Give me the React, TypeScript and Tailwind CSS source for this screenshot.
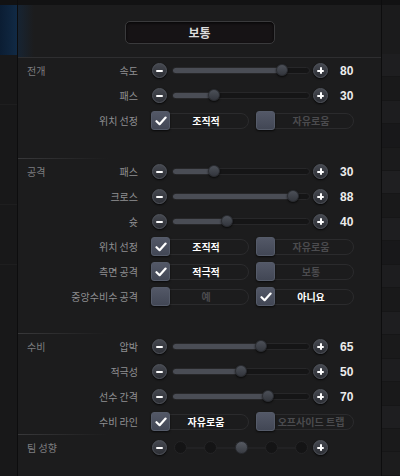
import React from "react";

const KR = "font-['Noto_Sans_CJK_KR','Noto_Sans',sans-serif]";

type SliderRow = { kind: "slider"; label: string; value: number };
type CheckRow = {
  kind: "check";
  label: string;
  options: [string, string];
  selected: 0 | 1;
};
type StepRow = { kind: "steps"; label: string; steps: number; selected: number };
type Row = SliderRow | CheckRow | StepRow;

interface Section {
  title: string;
  rows: Row[];
  padTop: string;
  padBottom: string;
}

const sections: Section[] = [
  {
    title: "전개",
    padTop: "pt-0",
    padBottom: "pb-[25px]",
    rows: [
      { kind: "slider", label: "속도", value: 80 },
      { kind: "slider", label: "패스", value: 30 },
      { kind: "check", label: "위치 선정", options: ["조직적", "자유로움"], selected: 0 },
    ],
  },
  {
    title: "공격",
    padTop: "pt-0",
    padBottom: "pb-[22px]",
    rows: [
      { kind: "slider", label: "패스", value: 30 },
      { kind: "slider", label: "크로스", value: 88 },
      { kind: "slider", label: "슛", value: 40 },
      { kind: "check", label: "위치 선정", options: ["조직적", "자유로움"], selected: 0 },
      { kind: "check", label: "측면 공격", options: ["적극적", "보통"], selected: 0 },
      { kind: "check", label: "중앙수비수 공격", options: ["예", "아니요"], selected: 1 },
    ],
  },
  {
    title: "수비",
    padTop: "pt-[2px]",
    padBottom: "pb-0",
    rows: [
      { kind: "slider", label: "압박", value: 65 },
      { kind: "slider", label: "적극성", value: 50 },
      { kind: "slider", label: "선수 간격", value: 70 },
      { kind: "check", label: "수비 라인", options: ["자유로움", "오프사이드 트랩"], selected: 0 },
    ],
  },
  {
    title: "팀 성향",
    padTop: "pt-0",
    padBottom: "pb-0",
    rows: [{ kind: "steps", label: "", steps: 5, selected: 2 }],
  },
];

// faint stripes of the list that sits behind the panel
const bands = [
  "#1e1e20", "#19191a", "#1d1d1f", "#18181a", "#1b1b1c", "#1f1f21",
  "#19191a", "#1e1e20", "#18181a", "#1d1d1f", "#19191a", "#1e1e20",
  "#1a1a1b", "#1d1d1f", "#19191a", "#1e1e20", "#1a1a1b", "#1c1c1d",
];

function RoundButton({ plus }: { plus?: boolean }) {
  return (
    <div className="flex h-[15px] w-[15px] shrink-0 items-center justify-center rounded-full border border-[#50545c] bg-gradient-to-b from-[#454850] to-[#2d2f35] shadow-[0_1px_2px_rgba(0,0,0,0.8)]">
      <div className="relative flex h-[7px] w-[7px] items-center justify-center">
        <div className="h-[2px] w-[7px] rounded-[1px] bg-white" />
        {plus && (
          <div className="absolute left-[2.5px] top-0 h-[7px] w-[2px] rounded-[1px] bg-white" />
        )}
      </div>
    </div>
  );
}

function Slider({ value }: { value: number }) {
  return (
    <div className="relative h-[7px] w-[138px] rounded-full border border-[#272729] bg-[#151516]">
      <div
        className="absolute left-0 top-0 h-full rounded-full bg-[#4a4d55]"
        style={{ width: `${value}%` }}
      />
      <div
        className="absolute top-[-4px] h-[12px] w-[12px] -translate-x-1/2 rounded-full border border-[#2a2c31] bg-gradient-to-b from-[#4c5058] to-[#33363d] shadow-[0_1px_2px_rgba(0,0,0,0.7)]"
        style={{ left: `${value}%` }}
      />
    </div>
  );
}

function CheckMark() {
  return (
    <svg width="12" height="10" viewBox="0 0 12 10" fill="none">
      <path
        d="M1.5 5.2 L4.6 8.2 L10.6 1.6"
        stroke="white"
        strokeWidth="2.2"
        strokeLinecap="round"
        strokeLinejoin="round"
      />
    </svg>
  );
}

function CheckPill({ text, on }: { text: string; on: boolean }) {
  return (
    <div className="flex h-[16px] w-[98px] items-center rounded-full border border-[#2b2b2d]">
      <div className="-ml-px flex h-[19px] w-[19px] shrink-0 items-center justify-center rounded-[3px] border border-[#555b69] bg-gradient-to-b from-[#535867] to-[#424755] shadow-[0_1px_2px_rgba(0,0,0,0.7)]">
        {on && <CheckMark />}
      </div>
      <span
        className={`flex-1 pr-[6px] text-center text-[10px] font-bold leading-none ${KR} ${
          on ? "text-white" : "text-[#4b4b4e]"
        }`}
      >
        {text}
      </span>
    </div>
  );
}

function Steps({ steps, selected }: { steps: number; selected: number }) {
  return (
    <div className="relative flex w-[138px] items-center justify-between px-[2px]">
      <div className="absolute left-[8px] right-[8px] top-1/2 h-[2px] -translate-y-1/2 bg-[#222224]" />
      {Array.from({ length: steps }).map((_, i) => (
        <div
          key={i}
          className={`relative h-[13px] w-[13px] rounded-full ${
            i === selected
              ? "border border-[#2a2c31] bg-gradient-to-b from-[#565a62] to-[#393c43]"
              : "border border-[#242426] bg-[#141415]"
          }`}
        />
      ))}
    </div>
  );
}

function RowView({ row, title }: { row: Row; title?: string }) {
  return (
    <div className="flex h-[25px] items-center">
      <div className="flex w-[120px] shrink-0 items-center justify-between pl-[9px]">
        <span className={`text-[10px] text-[#7e7e80] ${KR}`}>{title ?? ""}</span>
        <span className={`text-[10px] text-[#8f8f92] ${KR}`}>{row.label}</span>
      </div>
      {row.kind === "check" ? (
        <div className="ml-[13px] flex items-center gap-[7px]">
          <CheckPill text={row.options[0]} on={row.selected === 0} />
          <CheckPill text={row.options[1]} on={row.selected === 1} />
        </div>
      ) : (
        <div className="ml-[14px] flex items-center">
          <RoundButton />
          <div className="ml-[5px] mr-[3px]">
            {row.kind === "slider" ? (
              <Slider value={row.value} />
            ) : (
              <Steps steps={row.steps} selected={row.selected} />
            )}
          </div>
          <RoundButton plus />
          {row.kind === "slider" && (
            <span className="ml-[12px] font-['Liberation_Sans',Arial,sans-serif] text-[12px] font-bold text-[#ececec]">
              {row.value}
            </span>
          )}
        </div>
      )}
    </div>
  );
}

export default function App() {
  return (
    <div className="flex h-[476px] w-[400px] overflow-hidden bg-[#1c1c1d]">
      {/* left rail */}
      <div className="flex w-[18px] shrink-0 flex-col border-r border-[#0d0d0e] bg-[#181819]">
        <div className="h-[5px] bg-[#121213]" />
        <div className="h-[50px] bg-gradient-to-r from-[#0b1d33] to-[#112a45]" />
        <div className="h-[50px] border-b border-[#1e1e1f]" />
        <div className="h-[100px] border-b border-[#1e1e1f]" />
        <div className="h-[60px] border-b border-[#1e1e1f]" />
      </div>

      {/* panel */}
      <div className="flex min-w-0 flex-1 flex-col">
        <div className="h-[5px] bg-[#121213]" />
        <div className="flex h-[52px] items-start justify-center bg-[linear-gradient(90deg,rgba(18,44,72,0.5),rgba(18,44,72,0)_16px)] pt-[16px]">
          <div className="flex h-[23px] w-[150px] items-center justify-center rounded-[5px] border border-[#3a3a3c] bg-[#161315] shadow-[inset_0_1px_3px_rgba(0,0,0,0.8)]">
            <span className={`text-[12px] font-bold text-[#dcdcdc] ${KR}`}>보통</span>
          </div>
        </div>

        {sections.map((s, si) => (
          <div
            key={s.title}
            className={`${s.padTop} ${s.padBottom} ${si === 0 ? "border-t border-[#2e2e30]" : ""}`}
          >
            {si > 0 && (
              <div className="h-px w-[90px] bg-gradient-to-r from-[#38383a] to-transparent" />
            )}
            {s.rows.map((r, ri) => (
              <RowView key={ri} row={r} title={ri === 0 ? s.title : undefined} />
            ))}
          </div>
        ))}
      </div>

      {/* right rail */}
      <div className="flex w-[19px] shrink-0 flex-col border-l border-[#0d0d0e]">
        <div className="h-[5px] bg-[#121213]" />
        <div className="h-[50px] bg-[#1b1b1c]" />
        {bands.map((c, i) => (
          <div key={i} className="h-[24px] border-b border-[#161617]" style={{ backgroundColor: c }} />
        ))}
      </div>
    </div>
  );
}
